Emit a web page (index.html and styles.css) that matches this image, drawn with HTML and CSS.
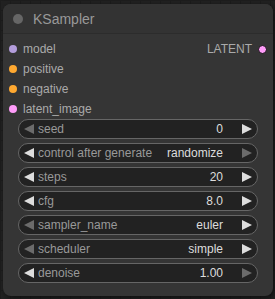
FILE: index.html
```html
<!DOCTYPE html>
<html lang="en">
  <head>
    <meta charset="UTF-8" />
    <title>KSampler</title>
    <link rel="stylesheet" href="styles.css">
  </head>
  <body>
    <div class="node">
      <!-- title bar -->
      <div class="title">
        <span class="title-dot"></span>
        <span class="title-text">KSampler</span>
      </div>

      <div class="slots">
        <div class="slot-row">
          <div class="slot in"><span class="dot model"></span>model</div>
          <div class="slot out">LATENT<span class="dot latent outlined"></span></div>
        </div>
        <div class="slot-row">
          <div class="slot in"><span class="dot cond"></span>positive</div>
        </div>
        <div class="slot-row">
          <div class="slot in"><span class="dot cond"></span>negative</div>
        </div>
        <div class="slot-row">
          <div class="slot in"><span class="dot latent"></span>latent_image</div>
        </div>
      </div>

      <!-- widgets -->
      <div class="widgets">
        <div class="widget">
          <svg class="arrow off" viewBox="0 0 10 10"><path d="M10 0 L0 5 L10 10 Z" /></svg>
          <span class="label">seed</span>
          <span class="value">0</span>
          <svg class="arrow" viewBox="0 0 10 10"><path d="M0 0 L10 5 L0 10 Z" /></svg>
        </div>
        <div class="widget">
          <svg class="arrow" viewBox="0 0 10 10"><path d="M10 0 L0 5 L10 10 Z" /></svg>
          <span class="label">control after generate</span>
          <span class="value">randomize</span>
          <svg class="arrow off" viewBox="0 0 10 10"><path d="M0 0 L10 5 L0 10 Z" /></svg>
        </div>
        <div class="widget">
          <svg class="arrow" viewBox="0 0 10 10"><path d="M10 0 L0 5 L10 10 Z" /></svg>
          <span class="label">steps</span>
          <span class="value">20</span>
          <svg class="arrow" viewBox="0 0 10 10"><path d="M0 0 L10 5 L0 10 Z" /></svg>
        </div>
        <div class="widget">
          <svg class="arrow" viewBox="0 0 10 10"><path d="M10 0 L0 5 L10 10 Z" /></svg>
          <span class="label">cfg</span>
          <span class="value">8.0</span>
          <svg class="arrow" viewBox="0 0 10 10"><path d="M0 0 L10 5 L0 10 Z" /></svg>
        </div>
        <div class="widget">
          <svg class="arrow off" viewBox="0 0 10 10"><path d="M10 0 L0 5 L10 10 Z" /></svg>
          <span class="label">sampler_name</span>
          <span class="value">euler</span>
          <svg class="arrow" viewBox="0 0 10 10"><path d="M0 0 L10 5 L0 10 Z" /></svg>
        </div>
        <div class="widget">
          <svg class="arrow off" viewBox="0 0 10 10"><path d="M10 0 L0 5 L10 10 Z" /></svg>
          <span class="label">scheduler</span>
          <span class="value">simple</span>
          <svg class="arrow" viewBox="0 0 10 10"><path d="M0 0 L10 5 L0 10 Z" /></svg>
        </div>
        <div class="widget">
          <svg class="arrow" viewBox="0 0 10 10"><path d="M10 0 L0 5 L10 10 Z" /></svg>
          <span class="label">denoise</span>
          <span class="value">1.00</span>
          <svg class="arrow off" viewBox="0 0 10 10"><path d="M0 0 L10 5 L0 10 Z" /></svg>
        </div>
      </div>
    </div>
  </body>
</html>
```

FILE: styles.css
```css
* {
  margin: 0;
  padding: 0;
  box-sizing: border-box;
  font-family: "Liberation Sans", Arial, sans-serif;
}

body {
  width: 275px;
  height: 299px;
  overflow: hidden;
  background-color: #222;
  background-image:
    linear-gradient(#1d1d1d 1px, transparent 1px),
    linear-gradient(90deg, #1d1d1d 1px, transparent 1px);
  background-size: 10px 10px;
}

.node {
  margin: 4px 0 0 3px;
  width: 270px;
  height: 292px;
  background-color: #353535;
  border-radius: 8px;
  box-shadow: 2px 2px 6px rgba(0, 0, 0, 0.6);
}

.title {
  height: 30px;
  display: flex;
  align-items: center;
  background-color: #333;
  border-radius: 8px 8px 0 0;
  border-bottom: 1px solid #2c2c2c;
}

.title-dot {
  width: 10px;
  height: 10px;
  margin-left: 10px;
  border-radius: 50%;
  background-color: #666;
}

.title-text {
  margin-left: 10px;
  font-size: 14px;
  color: #999;
}

.slots {
  padding-top: 5px;
}

.slot-row {
  height: 20px;
  display: flex;
  justify-content: space-between;
  align-items: center;
  font-size: 12px;
  color: #aaa;
}

.slot {
  display: flex;
  align-items: center;
}

.slot.in .dot {
  margin: 0 6px 0 6px;
}

.slot.out .dot {
  margin: 0 6px 0 6px;
}

.dot {
  width: 8px;
  height: 8px;
  border-radius: 50%;
}

.dot.model {
  background-color: #b39ddb;
}

.dot.cond {
  background-color: #ffa931;
}

.dot.latent {
  background-color: #ff9cf9;
}

.dot.outlined {
  width: 9px;
  height: 9px;
  border: 1px solid #111;
}

.widgets {
  display: flex;
  flex-direction: column;
  gap: 4px;
  padding: 0 15px;
}

.widget {
  height: 20px;
  display: flex;
  align-items: center;
  padding: 0 5px;
  background-color: #222;
  border: 1px solid #666;
  border-radius: 10px;
  font-size: 12px;
}

.arrow {
  width: 10px;
  height: 10px;
  fill: #ddd;
  flex-shrink: 0;
}

.arrow.off {
  fill: #6b6b6b;
}

.label {
  flex: 1;
  margin-left: 4px;
  color: #999;
  white-space: nowrap;
}

.value {
  margin-right: 19px;
  color: #ddd;
  white-space: nowrap;
}
```
